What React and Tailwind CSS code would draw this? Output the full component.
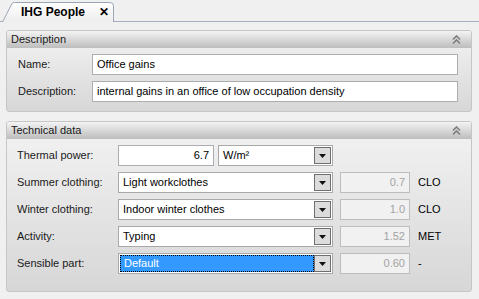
import React from 'react';

const FONT = { fontFamily: '"Liberation Sans", Arial, sans-serif' };

function Chevrons() {
  return (
    <svg width="9" height="10" viewBox="0 0 9 10" className="mr-[10px]">
      <path d="M1 4.5 L4.5 1 L8 4.5" fill="none" stroke="#7d7d7d" strokeWidth="1.6" />
      <path d="M1 8.5 L4.5 5 L8 8.5" fill="none" stroke="#7d7d7d" strokeWidth="1.6" />
    </svg>
  );
}

function Panel({ title, className, children }) {
  return (
    <div className={`flex flex-col border border-[#c6c6c6] rounded-[3px] overflow-hidden bg-gradient-to-b from-[#f3f3f3] to-[#d7d7d7] ${className}`}>
      <div className="h-[17px] shrink-0 flex items-center justify-between bg-gradient-to-b from-[#f4f4f4] to-[#bdbdbd] pl-[4px]">
        <span className="text-[11px] text-[#1a1a1a]">{title}</span>
        <Chevrons />
      </div>
      {children}
    </div>
  );
}

function TextBox({ value, className = '', right = false }) {
  return (
    <div className={`h-[21px] border border-[#abadb3] bg-white flex items-center px-[4px] text-[11px] text-black ${right ? 'justify-end' : ''} ${className}`}>
      {value}
    </div>
  );
}

function Combo({ value, className = '', selected = false }) {
  return (
    <div className={`h-[21px] border border-[#a9a9a9] bg-white flex items-stretch p-[1px] ${className}`}>
      <div
        className={`flex-1 flex items-center pl-[3px] text-[11px] ${
          selected ? 'bg-[#3399ff] text-white border border-dotted border-black' : 'text-black'
        }`}
      >
        {value}
      </div>
      <div className="w-[17px] border border-[#6f6f6f] bg-[#dcdcdc] flex items-center justify-center">
        <svg width="7" height="4" viewBox="0 0 7 4">
          <path d="M0 0 H7 L3.5 4 Z" fill="#111" />
        </svg>
      </div>
    </div>
  );
}

function ReadOnly({ value, unit }) {
  return (
    <>
      <div className="ml-[7px] w-[70px] h-[21px] border border-[#bdbdbd] bg-[#f1f1f1] flex items-center justify-end pr-[4px] text-[11px] text-[#a3a3a3]">
        {value}
      </div>
      <span className="ml-[8px] text-[11px] text-black">{unit}</span>
    </>
  );
}

const clothes = [
  { label: 'Summer clothing:', value: 'Light workclothes', num: '0.7', unit: 'CLO' },
  { label: 'Winter clothing:', value: 'Indoor winter clothes', num: '1.0', unit: 'CLO' },
  { label: 'Activity:', value: 'Typing', num: '1.52', unit: 'MET' },
  { label: 'Sensible part:', value: 'Default', num: '0.60', unit: '-', selected: true },
];

export default function App() {
  return (
    <div className="w-[479px] h-[299px] bg-[#f0f0f0] overflow-hidden flex flex-col" style={FONT}>
      {/* Tab strip */}
      <div className="h-[22px] shrink-0 flex items-end border-b border-[#a3afbf]">
        <div className="relative ml-[2px] w-[112px] h-[20px] -mb-[1px] flex items-center">
          <svg className="absolute inset-0" width="112" height="20" viewBox="0 0 112 20">
            <defs>
              <linearGradient id="tabg" x1="0" y1="0" x2="0" y2="1">
                <stop offset="0" stopColor="#ffffff" />
                <stop offset="1" stopColor="#ededed" />
              </linearGradient>
            </defs>
            <path d="M0.5 20 L10 1.5 Q10.8 0.5 12.5 0.5 L108 0.5 Q111.5 0.5 111.5 4 L111.5 20" fill="url(#tabg)" stroke="#9aa5b5" />
          </svg>
          <span className="relative ml-[19px] text-[12px] font-bold text-black">IHG People</span>
          <span className="relative ml-[14px] text-[12px] font-bold text-black">✕</span>
        </div>
      </div>

      <div className="flex flex-col pl-[6px] pr-[7px] pt-[8px] gap-[9px]">
        <Panel title="Description" className="h-[82px]">
          <div className="flex flex-col gap-[6px] pt-[6px] pl-[11px] pr-[13px]">
            <div className="flex items-center">
              <span className="w-[74px] text-[11px] text-[#1a1a1a]">Name:</span>
              <TextBox value="Office gains" className="flex-1" />
            </div>
            <div className="flex items-center">
              <span className="w-[74px] text-[11px] text-[#1a1a1a]">Description:</span>
              <TextBox value="internal gains in an office of low occupation density" className="flex-1" />
            </div>
          </div>
        </Panel>

        <Panel title="Technical data" className="h-[171px]">
          <div className="flex flex-col gap-[6px] pt-[6px] pl-[10px]">
            <div className="flex items-center">
              <span className="w-[101px] text-[11px] text-[#1a1a1a]">Thermal power:</span>
              <TextBox value="6.7" right className="w-[96px]" />
              <Combo value="W/m²" className="ml-[4px] w-[115px]" />
            </div>
            {clothes.map((r) => (
              <div key={r.label} className="flex items-center">
                <span className="w-[101px] text-[11px] text-[#1a1a1a]">{r.label}</span>
                <Combo value={r.value} selected={r.selected} className="w-[215px]" />
                <ReadOnly value={r.num} unit={r.unit} />
              </div>
            ))}
          </div>
        </Panel>
      </div>
    </div>
  );
}
